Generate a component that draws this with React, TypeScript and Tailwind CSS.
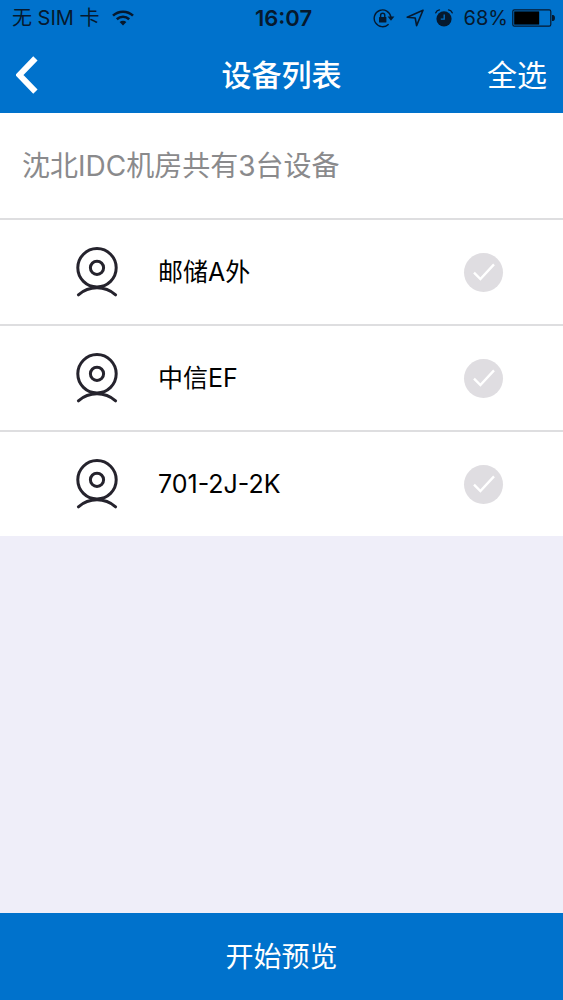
import { useState } from 'react';

const devices = [
    { id: 'yc-a', name: '邮储A外' },
    { id: 'zx-ef', name: '中信EF' },
    { id: '701', name: '701-2J-2K' },
];

function WifiIcon() {
    return (
        <svg className="h-4 w-[22px]" viewBox="0 0 22 16" fill="none" stroke="currentColor" strokeWidth="2.6" aria-hidden="true">
            <path d="M1 5.6C6.6 .4 15.4 .4 21 5.6" />
            <path d="M4.8 9.2C8.4 6 13.6 6 17.2 9.2" />
            <path d="M11 15.6L7.6 12.1C9.6 10.4 12.4 10.4 14.4 12.1Z" fill="currentColor" stroke="none" />
        </svg>
    );
}

function RotationLockIcon() {
    return (
        <svg className="h-5 w-[22px]" viewBox="0 0 22 20" fill="none" stroke="currentColor" strokeWidth="1.4" aria-hidden="true">
            <path d="M15.6 16.2A8.4 8.4 0 1 1 17.9 9" />
            <path d="M14.6 8.6H21.4L18 12.8Z" fill="currentColor" stroke="none" />
            <rect x="6" y="9" width="7.4" height="5.6" rx=".6" fill="currentColor" stroke="none" />
            <path d="M7.6 9.4V7.4a2.1 2.1 0 0 1 4.2 0V9.4" />
        </svg>
    );
}

function LocationIcon() {
    return (
        <svg className="h-[18px] w-[18px]" viewBox="0 0 18 18" fill="none" stroke="currentColor" strokeWidth="1.6" strokeLinejoin="round" aria-hidden="true">
            <path d="M17 1.2L1.2 8.2L9.2 9L10.6 16.6Z" />
        </svg>
    );
}

function AlarmIcon() {
    return (
        <svg className="h-[18px] w-[18px]" viewBox="0 0 18 18" fill="none" aria-hidden="true">
            <circle cx="9" cy="9.8" r="7.6" fill="currentColor" />
            <path d="M9.2 5.6V10.2H5.8" stroke="#0072cc" strokeWidth="1.3" />
            <path d="M.8 3.8Q1.8 1.4 4.4 .9M17.2 3.8Q16.2 1.4 13.6 .9" stroke="currentColor" strokeWidth="1.4" strokeLinecap="round" />
        </svg>
    );
}

function BatteryIcon() {
    return (
        <svg className="h-[18px] w-[43px]" viewBox="0 0 43 18" fill="none" aria-hidden="true">
            <rect x=".8" y=".8" width="38" height="16.4" rx="1.6" stroke="currentColor" strokeWidth="1.2" />
            <rect x="2.2" y="2.4" width="25" height="13.2" fill="black" />
            <path d="M40 6H41.4Q43 6.4 43 9T41.4 12H40Z" fill="currentColor" />
        </svg>
    );
}

function CameraIcon() {
    return (
        <svg className="h-[50px] w-[42px] shrink-0" viewBox="0 0 42 50" fill="none" stroke="#25232d" strokeWidth="3" strokeLinecap="round" aria-hidden="true">
            <circle cx="21" cy="20.8" r="19.2" />
            <circle cx="21" cy="20.8" r="6.6" />
            <path d="M2.4 47.8Q10.5 40.8 21 40.8T39.6 47.8" />
        </svg>
    );
}

export default function App() {
    const [selected, setSelected] = useState<string[]>([]);

    const toggle = (id: string) => {
        setSelected((prev) => (prev.includes(id) ? prev.filter((item) => item !== id) : [...prev, id]));
    };

    const toggleAll = () => {
        setSelected(selected.length === devices.length ? [] : devices.map((device) => device.id));
    };

    return (
        <div className="flex min-h-screen flex-col bg-[#efeef9] font-['Inter','Noto_Sans_CJK_SC',sans-serif] text-black">
            <header className="bg-[#0072cc]">
                {/* Status bar */}
                <div className="grid h-9 grid-cols-[1fr_auto_1fr] items-center pr-2 pl-3 text-xl text-[#06192e]">
                    <div className="flex items-center gap-3">
                        <span>无 SIM 卡</span>
                        <WifiIcon />
                    </div>
                    <span className="text-[22px] font-semibold">16:07</span>
                    <div className="flex items-center justify-end gap-[11px]">
                        <RotationLockIcon />
                        <LocationIcon />
                        <AlarmIcon />
                        <div className="flex items-center gap-1">
                            <span>68%</span>
                            <BatteryIcon />
                        </div>
                    </div>
                </div>

                {/* Navigation */}
                <div className="grid h-[77px] grid-cols-[1fr_auto_1fr] items-center px-4 text-3xl text-white">
                    <button type="button" aria-label="返回" className="justify-self-start">
                        <svg className="h-[38px] w-[22px]" viewBox="0 0 22 38" fill="none" stroke="currentColor" strokeWidth="6" aria-hidden="true">
                            <path d="M19.4 2.4L3.4 19L19.4 35.6" />
                        </svg>
                    </button>
                    <h1 className="font-medium">设备列表</h1>
                    <button type="button" onClick={toggleAll} className="justify-self-end">
                        全选
                    </button>
                </div>
            </header>

            <main className="flex-1">
                <p className="flex h-[107px] items-center border-b-2 border-[#dedee0] bg-white px-[22px] text-[28px] text-[#8a8a8c]">
                    沈北IDC机房共有3台设备
                </p>
                <ul className="divide-y-2 divide-[#dedee0] bg-white">
                    {devices.map((device) => (
                        <li key={device.id}>
                            <label className="flex h-[104px] items-center pr-[60px] pl-[76px]">
                                <CameraIcon />
                                <span className="ml-10 flex-1 pt-[2px] text-[25px]">{device.name}</span>
                                <span className="grid place-items-center">
                                    <input
                                        type="checkbox"
                                        checked={selected.includes(device.id)}
                                        onChange={() => toggle(device.id)}
                                        className="col-start-1 row-start-1 size-[39px] appearance-none rounded-full bg-[#dfdde1] checked:bg-[#0072cc]"
                                    />
                                    <svg className="pointer-events-none col-start-1 row-start-1 h-[18px] w-[22px]" viewBox="0 0 22 18" fill="none" stroke="white" strokeWidth="2.4" aria-hidden="true">
                                        <path d="M1 9.6L7.4 16L21 1.4" />
                                    </svg>
                                </span>
                            </label>
                        </li>
                    ))}
                </ul>
            </main>

            <button type="button" className="h-[87px] bg-[#0072cc] text-[28px] text-white">
                开始预览
            </button>
        </div>
    );
}
